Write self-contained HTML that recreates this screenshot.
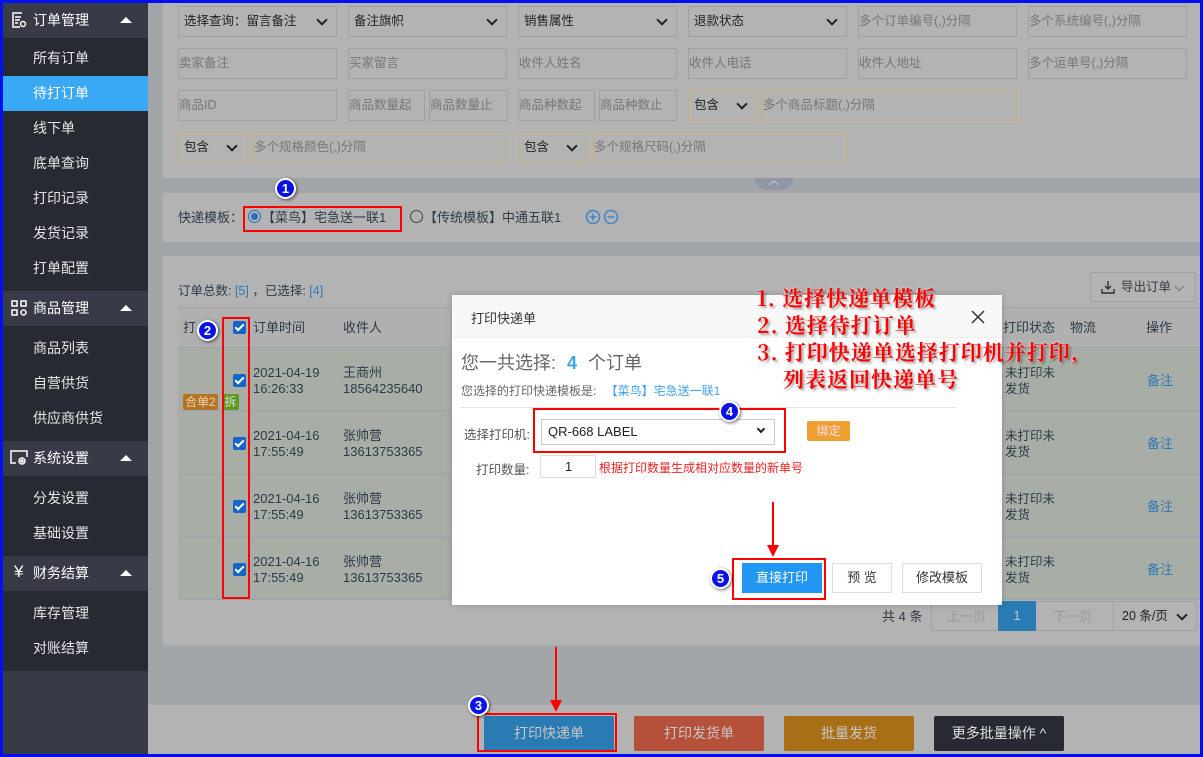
<!DOCTYPE html>
<html><head><meta charset="utf-8">
<style>
*{margin:0;padding:0;box-sizing:border-box}
body{width:1203px;height:757px;overflow:hidden;position:relative;background:#a3a6a9;font-family:"Liberation Sans","Noto Sans CJK SC",sans-serif;font-size:13px;color:#3a3d42}
.a{position:absolute}
.sb{left:3px;top:0;width:145px;height:757px;background:#383b47}
.gh{position:absolute;left:3px;width:145px;height:35px;background:#383b47;color:#fff;font-size:14px;line-height:35px}
.gh span{position:absolute;left:30px}
.gh i{position:absolute;right:16px;top:14px;width:0;height:0;border-left:6px solid transparent;border-right:6px solid transparent;border-bottom:6px solid #fff}
.gd{position:absolute;left:3px;width:145px;background:#272a33}
.it{position:absolute;left:3px;width:145px;height:35px;line-height:35px;padding-left:30px;color:#e6e6e6;font-size:14px}
.pn{background:#b3b3b3}
.in{position:absolute;height:31px;border:1px solid #a0a0a0;background:#b3b3b3;color:#777;line-height:29px;font-size:12.5px;padding-left:0}
.in.o{border-color:#c8ad7e}
.in.s{color:#222;padding-left:5px}
.in.s:after{content:"";position:absolute;right:10px;top:9px;width:6px;height:6px;border-right:2px solid #222;border-bottom:2px solid #222;transform:rotate(45deg)}
.num{position:absolute;width:21px;height:21px;border-radius:50%;background:#0a12e6;border:2px solid #fff;color:#fff;font-weight:bold;font-size:13px;text-align:center;line-height:17px;box-shadow:1px 1px 3px rgba(0,0,0,.6)}
.rb{position:absolute;border:2px solid #f00}
.cb{position:absolute;width:13px;height:13px;background:#1565c8;border-radius:2px;left:233px}
.cb:after{content:"";position:absolute;left:4px;top:1px;width:3px;height:7px;border-right:2px solid #fff;border-bottom:2px solid #fff;transform:rotate(45deg)}
.row{position:absolute;left:178px;width:1025px;height:63px;background:#a8aea6;border-bottom:1px solid #9ea2aa}
.tx{position:absolute;line-height:16px;color:#2c3a48}
.bt{position:absolute;height:35px;top:716px;width:130px;color:#c8c8c8;text-align:center;line-height:35px;font-size:14px;border-radius:2px}
.ann{position:absolute;left:757px;color:#f00;font-size:21px;font-weight:bold;line-height:28px;letter-spacing:1px;text-shadow:2px 2px 2px rgba(0,0,0,.35),0 0 2px #fff;font-family:"Noto Serif CJK SC","Liberation Serif",serif}
</style></head><body>
<div class="a sb"></div>
<div class="gh" style="top:3px"><span><svg width="16" height="16" style="position:absolute;left:-22px;top:9px" viewBox="0 0 16 16" fill="none" stroke="#fff" stroke-width="1.5"><path d="M11 1H2v14h7M4 5h6M4 8h5M4 11h3"/><circle cx="12" cy="12" r="2.5"/></svg>订单管理</span><i></i></div>
<div class="gd" style="top:38px;height:253px"></div>
<div class="it" style="top:41px">所有订单</div>
<div class="it" style="top:76px;background:#39a9f5;color:#fff">待打订单</div>
<div class="it" style="top:111px">线下单</div>
<div class="it" style="top:146px">底单查询</div>
<div class="it" style="top:181px">打印记录</div>
<div class="it" style="top:216px">发货记录</div>
<div class="it" style="top:251px">打单配置</div>
<div class="gh" style="top:291px"><span><svg width="16" height="16" style="position:absolute;left:-22px;top:9px" viewBox="0 0 16 16" fill="none" stroke="#fff" stroke-width="1.5"><rect x="1" y="1" width="5" height="5"/><rect x="10" y="1" width="5" height="5"/><rect x="1" y="10" width="5" height="5"/><circle cx="12.5" cy="12.5" r="2.5"/></svg>商品管理</span><i></i></div>
<div class="gd" style="top:326px;height:115px"></div>
<div class="it" style="top:331px">商品列表</div>
<div class="it" style="top:366px">自营供货</div>
<div class="it" style="top:401px">供应商供货</div>
<div class="gh" style="top:441px"><span><svg width="18" height="16" style="position:absolute;left:-23px;top:9px" viewBox="0 0 18 16" fill="none" stroke="#fff" stroke-width="1.5"><path d="M6 13H1V1h16v6"/><circle cx="12" cy="11" r="3"/><circle cx="12" cy="11" r="1"/></svg>系统设置</span><i></i></div>
<div class="gd" style="top:476px;height:80px"></div>
<div class="it" style="top:481px">分发设置</div>
<div class="it" style="top:516px">基础设置</div>
<div class="gh" style="top:556px"><span><b style="position:absolute;left:-19px;top:-2px;font-size:17px;font-weight:normal">¥</b>财务结算</span><i></i></div>
<div class="gd" style="top:591px;height:80px"></div>
<div class="it" style="top:596px">库存管理</div>
<div class="it" style="top:631px">对账结算</div>

<div class="a pn" style="left:163px;top:0;width:1040px;height:178px"></div>
<div class="in s" style="left:178px;top:6px;width:159px">选择查询：留言备注</div>
<div class="in s" style="left:348px;top:6px;width:159px">备注旗帜</div>
<div class="in s" style="left:518px;top:6px;width:159px">销售属性</div>
<div class="in s" style="left:688px;top:6px;width:159px">退款状态</div>
<div class="in" style="left:858px;top:6px;width:159px">多个订单编号(,)分隔</div>
<div class="in" style="left:1028px;top:6px;width:159px">多个系统编号(,)分隔</div>
<div class="in" style="left:178px;top:48px;width:159px">卖家备注</div>
<div class="in" style="left:348px;top:48px;width:159px">买家留言</div>
<div class="in" style="left:518px;top:48px;width:159px">收件人姓名</div>
<div class="in" style="left:688px;top:48px;width:159px">收件人电话</div>
<div class="in" style="left:858px;top:48px;width:159px">收件人地址</div>
<div class="in" style="left:1028px;top:48px;width:159px">多个运单号(,)分隔</div>
<div class="in" style="left:178px;top:90px;width:159px">商品ID</div>
<div class="in" style="left:348px;top:90px;width:77px">商品数量起</div>
<div class="in" style="left:429px;top:90px;width:79px">商品数量止</div>
<div class="in" style="left:518px;top:90px;width:77px">商品种数起</div>
<div class="in" style="left:599px;top:90px;width:78px">商品种数止</div>
<div class="in s o" style="left:688px;top:90px;width:69px">包含</div>
<div class="in o" style="left:762px;top:90px;width:255px">多个商品标题(,)分隔</div>
<div class="in s o" style="left:178px;top:132px;width:69px">包含</div>
<div class="in o" style="left:253px;top:132px;width:254px">多个规格颜色(,)分隔</div>
<div class="in s o" style="left:518px;top:132px;width:69px">包含</div>
<div class="in o" style="left:593px;top:132px;width:254px">多个规格尺码(,)分隔</div>
<div class="a" style="left:755px;top:178px;width:38px;height:12px;background:#9097a5;border-radius:0 0 12px 12px"><svg width="38" height="12"><path d="M14 7L19 3L24 7" fill="none" stroke="#bbb" stroke-width="1.2"/></svg></div>

<div class="a pn" style="left:163px;top:193px;width:1040px;height:49px"></div>
<div class="tx" style="left:178px;top:210px;font-size:13px">快递模板：</div>
<div class="a" style="left:248px;top:210px;width:13px;height:13px;border:1px solid #2a6fc0;border-radius:50%"><div style="margin:2px;width:7px;height:7px;border-radius:50%;background:#2a6fc0"></div></div>
<div class="tx" style="left:262px;top:210px">【菜鸟】宅急送一联1</div>
<div class="a" style="left:410px;top:210px;width:13px;height:13px;border:1px solid #444;border-radius:50%"></div>
<div class="tx" style="left:424px;top:210px">【传统模板】中通五联1</div>
<svg class="a" style="left:585px;top:209px" width="36" height="16" fill="none" stroke="#3f84c8" stroke-width="1.5"><circle cx="8" cy="8" r="6.5"/><path d="M8 4.5v7M4.5 8h7"/><circle cx="26" cy="8" r="6.5"/><path d="M22.5 8h7"/></svg>

<div class="a pn" style="left:163px;top:256px;width:1040px;height:389px"></div>
<div class="tx" style="left:178px;top:283px;font-size:12.5px">订单总数: <span style="color:#2f79b8">[5]</span> ，已选择: <span style="color:#2f79b8">[4]</span></div>
<div class="a" style="left:1090px;top:272px;width:106px;height:30px;border:1px solid #a0a0a0;line-height:28px;padding-left:30px;font-size:12.5px;color:#3a3d42">导出订单 ⌵<svg style="position:absolute;left:10px;top:7px" width="14" height="14" fill="none" stroke="#333" stroke-width="1.4"><path d="M7 1v8M4 6l3 3 3-3M1 9v4h12V9"/></svg></div>
<div class="a" style="left:178px;top:307px;width:1025px;height:41px;background:#b0b0b0;border-top:1px solid #a2a2a2;border-bottom:1px solid #9ea2aa"></div>
<div class="tx" style="left:183px;top:320px">打</div>
<div class="tx" style="left:253px;top:320px">订单时间</div>
<div class="tx" style="left:343px;top:320px">收件人</div>
<div class="tx" style="left:1003px;top:320px">打印状态</div>
<div class="tx" style="left:1070px;top:320px">物流</div>
<div class="tx" style="left:1146px;top:320px">操作</div>
<div class="cb" style="top:321px"></div>

<div class="row" style="top:348px"></div>
<div class="row" style="top:411px"></div>
<div class="row" style="top:474px"></div>
<div class="row" style="top:537px"></div>
<div class="cb" style="top:374px"></div><div class="cb" style="top:437px"></div><div class="cb" style="top:500px"></div><div class="cb" style="top:563px"></div>
<div class="tx" style="left:253px;top:365px">2021-04-19<br>16:26:33</div>
<div class="tx" style="left:343px;top:365px">王商州<br>18564235640</div>
<div class="a" style="left:183px;top:394px;width:35px;height:16px;background:#b57326;color:#e8d3b0;font-size:12px;line-height:16px;text-align:center;border-radius:2px">合单2</div>
<div class="a" style="left:222px;top:394px;width:17px;height:16px;background:#5d9a1d;color:#ddd;font-size:12px;line-height:16px;text-align:center;border-radius:2px">拆</div>
<div class="tx" style="left:253px;top:428px">2021-04-16<br>17:55:49</div><div class="tx" style="left:343px;top:428px">张帅营<br>13613753365</div>
<div class="tx" style="left:253px;top:491px">2021-04-16<br>17:55:49</div><div class="tx" style="left:343px;top:491px">张帅营<br>13613753365</div>
<div class="tx" style="left:253px;top:554px">2021-04-16<br>17:55:49</div><div class="tx" style="left:343px;top:554px">张帅营<br>13613753365</div>
<div class="tx" style="left:1005px;top:365px;font-size:12.5px">未打印未<br>发货</div><div class="tx" style="left:1147px;top:373px;color:#2f79b8">备注</div>
<div class="tx" style="left:1005px;top:428px;font-size:12.5px">未打印未<br>发货</div><div class="tx" style="left:1147px;top:436px;color:#2f79b8">备注</div>
<div class="tx" style="left:1005px;top:491px;font-size:12.5px">未打印未<br>发货</div><div class="tx" style="left:1147px;top:499px;color:#2f79b8">备注</div>
<div class="tx" style="left:1005px;top:554px;font-size:12.5px">未打印未<br>发货</div><div class="tx" style="left:1147px;top:562px;color:#2f79b8">备注</div>

<div class="tx" style="left:882px;top:609px">共 4 条</div>
<div class="a" style="left:931px;top:601px;width:215px;height:30px;border:1px solid #a0a0a0"></div>
<div class="tx" style="left:947px;top:609px;color:#999">上一页</div>
<div class="a" style="left:998px;top:601px;width:38px;height:30px;background:#2a7ab4;color:#bcd;text-align:center;line-height:30px">1</div>
<div class="tx" style="left:1053px;top:609px;color:#999">下一页</div>
<div class="in s" style="left:1113px;top:601px;width:84px;height:30px;line-height:28px;padding-left:8px">20 条/页</div>

<div class="a" style="left:148px;top:705px;width:1055px;height:52px;background:#b3b3b3"></div>
<div class="bt" style="left:484px;background:#2a7ab4">打印快递单</div>
<div class="bt" style="left:634px;background:#b5503a">打印发货单</div>
<div class="bt" style="left:784px;background:#a86f17">批量发货</div>
<div class="bt" style="left:934px;background:#272a33;color:#e0e0e0">更多批量操作 ^</div>

<div class="a" style="left:452px;top:295px;width:550px;height:310px;background:#fff;box-shadow:0 0 6px rgba(0,0,0,.2)"></div>
<div class="a" style="left:452px;top:295px;width:550px;height:43px;background:#f8f8f8;border-bottom:1px solid #eee"></div>
<div class="a" style="left:471px;top:308px;font-size:13px;color:#333">打印快递单</div>
<svg class="a" style="left:971px;top:310px" width="14" height="14" stroke="#333" stroke-width="1.5"><path d="M1 1L13 13M13 1L1 13"/></svg>
<div class="a" style="left:461px;top:349px;font-size:18px;color:#666">您一共选择: <b style="color:#3ea2f0;margin:0 6px">4</b> 个订单</div>
<div class="a" style="left:461px;top:382px;font-size:12px;color:#666">您选择的打印快递模板是: <span style="color:#3ea2f0;margin-left:6px">【菜鸟】宅急送一联1</span></div>
<div class="a" style="left:461px;top:407px;width:495px;height:1px;background:#e4e4e4"></div>
<div class="a" style="left:464px;top:424px;font-size:12.5px;color:#555">选择打印机:</div>
<div class="a" style="left:541px;top:419px;width:234px;height:26px;border:1px solid #ccc;font-size:13px;line-height:24px;padding-left:6px;color:#222">QR-668 LABEL<span style="position:absolute;right:10px;top:6px;width:6px;height:6px;border-right:2px solid #222;border-bottom:2px solid #222;transform:rotate(45deg)"></span></div>
<div class="a" style="left:807px;top:421px;width:43px;height:20px;background:#f0a030;color:#fde;font-size:12px;line-height:20px;text-align:center;border-radius:2px">绑定</div>
<div class="a" style="left:476px;top:459px;font-size:12.5px;color:#555">打印数量:</div>
<div class="a" style="left:540px;top:455px;width:56px;height:23px;border:1px solid #ddd;font-size:13px;line-height:21px;padding-left:24px;color:#222">1</div>
<div class="a" style="left:599px;top:459px;font-size:12px;color:#e22">根据打印数量生成相对应数量的新单号</div>
<div class="a" style="left:742px;top:563px;width:80px;height:30px;background:#2196f3;color:#fff;font-size:13px;line-height:30px;text-align:center">直接打印</div>
<div class="a" style="left:832px;top:563px;width:60px;height:30px;border:1px solid #ddd;color:#333;line-height:28px;text-align:center">预 览</div>
<div class="a" style="left:902px;top:563px;width:80px;height:30px;border:1px solid #ddd;color:#333;line-height:28px;text-align:center">修改模板</div>

<div class="rb" style="left:243px;top:206px;width:159px;height:26px"></div>
<div class="rb" style="left:222px;top:317px;width:28px;height:282px"></div>
<div class="rb" style="left:477px;top:713px;width:140px;height:39px"></div>
<div class="rb" style="left:533px;top:408px;width:253px;height:45px"></div>
<div class="rb" style="left:732px;top:558px;width:94px;height:42px"></div>
<svg class="a" style="left:0;top:0" width="1203" height="757">
<path d="M773 502V548M556 647V703" stroke="#f00" stroke-width="2"/>
<path d="M767 545L773 557L779 545ZM550 700L556 712L562 700Z" fill="#f00"/>
</svg>
<div class="ann" style="top:284px">1. 选择快递单模板</div>
<div class="ann" style="top:311px">2. 选择待打订单</div>
<div class="ann" style="top:338px">3. 打印快递单选择打印机并打印,</div>
<div class="ann" style="top:365px;left:783px">列表返回快递单号</div>
<div class="num" style="left:275px;top:178px">1</div>
<div class="num" style="left:197px;top:320px">2</div>
<div class="num" style="left:468px;top:695px">3</div>
<div class="num" style="left:719px;top:401px">4</div>
<div class="num" style="left:710px;top:568px">5</div>

<div class="a" style="left:0;top:0;width:1203px;height:757px;border:3px solid #0010f0;pointer-events:none"></div>
</body></html>
